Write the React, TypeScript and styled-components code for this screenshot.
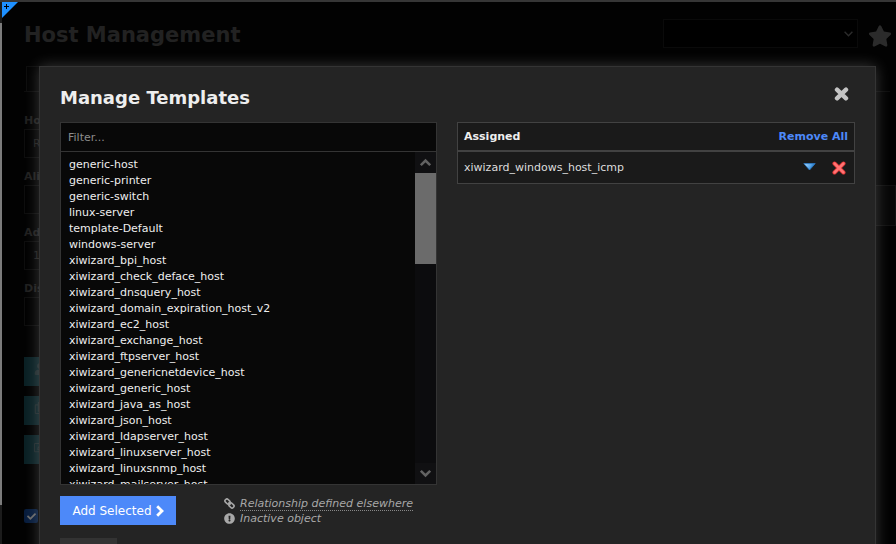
import React from "react";
import styled, { createGlobalStyle, css } from "styled-components";
import {
  FaCheck,
  FaExclamationCircle,
  FaRegCopy,
  FaRegEdit,
  FaStar,
  FaUser,
} from "react-icons/fa";

const GlobalStyle = createGlobalStyle`
  * { box-sizing: border-box; }
  body {
    margin: 0;
    background: #020202;
    color: #eee;
    font: 11px/16px Verdana, "DejaVu Sans", sans-serif;
  }
  button, input, select { font: inherit; color: inherit; border-radius: 0; }
`;

const Screen = styled.div`
  position: relative;
  display: grid;
  grid-template-columns: 2px 1fr;
  height: 100vh;
  overflow: hidden;
  border-top: 2px solid #363636;
`;

const Rail = styled.div`
  display: flex;
  flex-direction: column;
  background: #1c1c1c;
  padding: 21px 0 39px;
`;

const RailHandle = styled.div`
  flex: 1;
  background: #7c7c7c;
`;

const Page = styled.main`
  min-width: 0;
  padding: 17px 0 0 22px;
`;

const CornerButton = styled.button`
  position: absolute;
  top: 0;
  left: 2px;
  width: 16px;
  height: 16px;
  padding: 0;
  border: 0;
  background: none;
  svg { display: block; }
`;

const PageHeader = styled.header`
  display: flex;
  align-items: flex-start;
  justify-content: space-between;
  padding-right: 4px;
  height: 47px;
`;

const PageTitle = styled.h1`
  margin: 0;
  font-size: 21px;
  line-height: 32px;
  color: #222;
`;

const HeaderTools = styled.div`
  display: flex;
  align-items: flex-start;
  gap: 10px;
  color: #2b2b2b;
  > svg { margin-top: 5px; }
`;

const SelectWrap = styled.div`
  display: grid;
  align-items: center;
  width: 195px;
  > * { grid-area: 1 / 1; }
  svg { justify-self: end; margin-right: 5px; pointer-events: none; }
`;

const HostSelect = styled.select`
  width: 100%;
  height: 29px;
  border: 1px solid #0a0a0a;
  background: #000;
  appearance: none;
`;

const TabStrip = styled.div`
  display: flex;
  height: 26px;
  margin-right: 6px;
  border-bottom: 1px solid #0d0d0d;
`;

const Tab = styled.button`
  width: 120px;
  margin-left: 2px;
  border: 1px solid #0d0d0d;
  border-bottom: 0;
  background: none;
`;

const FormArea = styled.div`
  display: grid;
  grid-template-columns: 200px 1fr;
  gap: 20px;
  padding-top: 20px;
`;

const Fields = styled.div`
  display: flex;
  flex-direction: column;
  gap: 10px;
`;

const Field = styled.label`
  display: flex;
  flex-direction: column;
  font-weight: bold;
  line-height: 17px;
  color: #1f1f1f;
`;

const FieldInput = styled.input`
  height: 29px;
  padding: 0 8px;
  border: 1px solid #0d0d0d;
  background: #010101;
  font-weight: normal;
`;

const SideRow = styled.div`
  align-self: start;
  height: 41px;
  margin-top: 73px;
  border: 1px solid #111;
  background: #070707;
`;

const ActionStack = styled.div`
  display: flex;
  flex-direction: column;
  align-items: flex-start;
  gap: 10px;
  margin-top: 31px;
`;

const TealButton = styled.button`
  width: 150px;
  height: 29px;
  padding: 0 10px;
  border: 0;
  background: #0a2024;
  color: #1f2a2c;
  text-align: left;
`;

const CheckLabel = styled.label`
  display: grid;
  width: 14px;
  margin-top: 45px;
  place-items: center;
  color: #686868;
  > * { grid-area: 1 / 1; }
  svg { pointer-events: none; }
`;

const CheckBox = styled.input`
  appearance: none;
  width: 14px;
  height: 14px;
  margin: 0;
  border-radius: 2px;
  background: #071c3c;
`;

const Overlay = styled.div`
  position: absolute;
  inset: 0;
  padding: 64px 20px 0 39px;
`;

const Dialog = styled.section`
  padding: 20px;
  border: 1px solid #343434;
  background: #242424;
  box-shadow: 0 0 14px rgba(255, 255, 255, 0.22);
`;

const DialogHeader = styled.header`
  display: flex;
  justify-content: space-between;
  height: 35px;
`;

const DialogTitle = styled.h2`
  margin: 0;
  font-size: 18px;
  line-height: 22px;
  color: #eee;
`;

const plainButton = css`
  padding: 0;
  border: 0;
  background: none;
  cursor: pointer;
  svg { display: block; }
`;

const CloseButton = styled.button`
  ${plainButton}
  align-self: flex-start;
  margin-right: 6px;
`;

const Columns = styled.div`
  display: grid;
  grid-template-columns: 377fr 398fr;
  gap: 20px;
  align-items: start;
`;

const FilterInput = styled.input`
  display: block;
  width: 100%;
  height: 29px;
  padding: 0 7px;
  border: 1px solid #343434;
  border-bottom: 0;
  background: #080808;
  &::placeholder { color: #8c8c8c; opacity: 1; }
`;

const ListFrame = styled.div`
  display: grid;
  grid-template-columns: 1fr 21px;
  height: 334px;
  border: 1px solid #343434;
  background: #080808;
`;

const TemplateList = styled.select`
  min-width: 0;
  height: 332px;
  padding: 6px 6px 0;
  border: 0;
  outline: 0;
  background: #080808;
  color: #eee;
  overflow-y: auto;
  scrollbar-width: none;
  option {
    height: 16px;
    min-height: 16px;
    padding: 0 2px;
    line-height: 16px;
  }
`;

const ScrollTrack = styled.div`
  display: flex;
  flex-direction: column;
  background: #0c0c0e;
`;

const ScrollArrow = styled.button`
  ${plainButton}
  display: grid;
  place-items: center;
  height: 21px;
  background: #101012;
`;

const ScrollThumb = styled.div`
  height: 91px;
  margin-bottom: auto;
  background: #6b6b6b;
`;

const AssignedTable = styled.table`
  width: 100%;
  border-collapse: collapse;
  border: 1px solid #424242;
  background: #1a1a1a;
  th, td { padding: 0 6px; text-align: left; }
  th { height: 28px; padding-top: 2px; border-bottom: 2px solid #424242; }
  td { height: 33px; padding-top: 1px; color: #ddd; }
  td:last-child { padding-right: 8px; }
`;

const RowEnd = styled.div`
  display: flex;
  justify-content: flex-end;
  align-items: center;
  gap: 16px;
`;

const RemoveAll = styled.a`
  color: #4d89f9;
  text-decoration: none;
`;

const IconButton = styled.button`
  ${plainButton}
`;

const DialogActions = styled.div`
  display: flex;
  align-items: flex-start;
  gap: 48px;
  margin-top: 11px;
`;

const AddButton = styled.button`
  display: flex;
  align-items: center;
  justify-content: center;
  gap: 4px;
  min-width: 116px;
  height: 29px;
  padding: 0 10px;
  border: 0;
  background: #4d89f9;
  color: #fff;
  font-size: 12px;
  white-space: nowrap;
`;

const Legend = styled.ul`
  margin: 0;
  padding: 0;
  list-style: none;
  color: #a8a8a8;
  font-style: italic;
  line-height: 15px;
`;

const LegendItem = styled.li`
  display: flex;
  align-items: center;
  gap: 5px;
  height: 15px;
`;

const Hint = styled.span`
  height: 15px;
  border-bottom: 1px dotted #888;
`;

const GreyButton = styled.button`
  display: block;
  width: 57px;
  height: 29px;
  margin-top: 12px;
  border: 0;
  background: #333;
`;

const templates = [
  "generic-host",
  "generic-printer",
  "generic-switch",
  "linux-server",
  "template-Default",
  "windows-server",
  "xiwizard_bpi_host",
  "xiwizard_check_deface_host",
  "xiwizard_dnsquery_host",
  "xiwizard_domain_expiration_host_v2",
  "xiwizard_ec2_host",
  "xiwizard_exchange_host",
  "xiwizard_ftpserver_host",
  "xiwizard_genericnetdevice_host",
  "xiwizard_generic_host",
  "xiwizard_java_as_host",
  "xiwizard_json_host",
  "xiwizard_ldapserver_host",
  "xiwizard_linuxserver_host",
  "xiwizard_linuxsnmp_host",
  "xiwizard_mailserver_host",
];

const hostFields = [
  { label: "Host Name", value: "R" },
  { label: "Alias", value: "" },
  { label: "Address", value: "1" },
  { label: "Display Name", value: "" },
];

const Chevron = ({ up = false }: { up?: boolean }) => (
  <svg width="11" height="9" viewBox="0 0 11 9" fill="none" stroke="#626262" strokeWidth="2.6">
    <path d={up ? "M.8 7.2 5.5 2.5l4.7 4.7" : "M.8 1.8 5.5 6.5l4.7-4.7"} />
  </svg>
);

const CloseIcon = () => (
  <svg width="15" height="14" viewBox="0 0 15 14" stroke="#c4c4c4" strokeWidth="4.4" strokeLinecap="round">
    <path d="M3 2.7 12 11.3M12 2.7 3 11.3" />
  </svg>
);

const ArrowIcon = () => (
  <svg width="8" height="12" viewBox="0 0 8 12" fill="none" stroke="#fff" strokeWidth="2.8">
    <path d="M1.2 1.2 6 6l-4.8 4.8" />
  </svg>
);

const ChainIcon = () => (
  <svg width="11" height="11" viewBox="0 0 11 11" fill="none" stroke="currentColor" strokeWidth="1.6">
    <rect x=".8" y="1.6" width="5.4" height="3.8" rx="1.7" transform="rotate(45 3.5 3.5)" />
    <rect x="4.8" y="5.6" width="5.4" height="3.8" rx="1.7" transform="rotate(45 7.5 7.5)" />
    <path d="M4.4 4.4l2.2 2.2" />
  </svg>
);

const DownIcon = () => (
  <svg width="13" height="10" viewBox="0 0 13 10">
    <defs>
      <linearGradient id="down" x1="0" y1="0" x2="1" y2="0.3">
        <stop offset="0" stopColor="#b5dcfa" />
        <stop offset="0.6" stopColor="#5ba9ec" />
        <stop offset="1" stopColor="#1767b4" />
      </linearGradient>
    </defs>
    <path d="M.8.6h11.4L6.5 7z" fill="url(#down)" stroke="#2b7ccb" strokeWidth=".8" />
  </svg>
);

const DeleteIcon = () => (
  <svg width="14" height="14" viewBox="0 0 14 14" strokeLinecap="round">
    <path d="M2.5 2.5 11.5 11.5M11.5 2.5 2.5 11.5" stroke="#e83a3a" strokeWidth="4" />
    <path d="M2.6 2.6 11.4 11.4M11.4 2.6 2.6 11.4" stroke="#ff7474" strokeWidth="2.4" />
  </svg>
);

export default function App() {
  return (
    <Screen>
      <GlobalStyle />
      <Rail>
        <RailHandle />
      </Rail>
      <Page>
        <PageHeader>
          <PageTitle>Host Management</PageTitle>
          <HeaderTools>
            <SelectWrap>
              <HostSelect aria-label="Host" />
              <svg width="9" height="6" viewBox="0 0 9 6" fill="none" stroke="currentColor" strokeWidth="1.4">
                <path d="M.6.8 4.5 4.7 8.4.8" />
              </svg>
            </SelectWrap>
            <FaStar size={24} />
          </HeaderTools>
        </PageHeader>
        <TabStrip>
          <Tab aria-label="Common settings" />
        </TabStrip>
        <FormArea>
          <Fields>
            {hostFields.map((field) => (
              <Field key={field.label}>
                {field.label}
                <FieldInput defaultValue={field.value} />
              </Field>
            ))}
          </Fields>
          <SideRow />
        </FormArea>
        <ActionStack>
          <TealButton aria-label="Templates"><FaUser size={12} /></TealButton>
          <TealButton aria-label="Copy"><FaRegCopy size={12} /></TealButton>
          <TealButton aria-label="Edit"><FaRegEdit size={12} /></TealButton>
        </ActionStack>
        <CheckLabel>
          <CheckBox type="checkbox" defaultChecked aria-label="Active" />
          <FaCheck size={9} />
        </CheckLabel>
      </Page>
      <CornerButton aria-label="Expand">
        <svg width="16" height="16" viewBox="0 0 16 16">
          <path d="M0 0h16L0 16z" fill="#1e90ff" />
          <path d="M4.5 2v5M2 4.5h5" stroke="#000" strokeWidth="1" />
        </svg>
      </CornerButton>
      <Overlay>
        <Dialog role="dialog" aria-labelledby="dialog-title">
          <DialogHeader>
            <DialogTitle id="dialog-title">Manage Templates</DialogTitle>
            <CloseButton aria-label="Close">
              <CloseIcon />
            </CloseButton>
          </DialogHeader>
          <Columns>
            <div>
              <FilterInput placeholder="Filter..." aria-label="Filter templates" />
              <ListFrame>
                <TemplateList multiple aria-label="Templates">
                  {templates.map((name) => (
                    <option key={name}>{name}</option>
                  ))}
                </TemplateList>
                <ScrollTrack>
                  <ScrollArrow aria-label="Scroll up"><Chevron up /></ScrollArrow>
                  <ScrollThumb />
                  <ScrollArrow aria-label="Scroll down"><Chevron /></ScrollArrow>
                </ScrollTrack>
              </ListFrame>
              <DialogActions>
                <AddButton>
                  Add Selected <ArrowIcon />
                </AddButton>
                <Legend>
                  <LegendItem>
                    <ChainIcon />
                    <Hint>Relationship defined elsewhere</Hint>
                  </LegendItem>
                  <LegendItem>
                    <FaExclamationCircle size={11} />
                    <span>Inactive object</span>
                  </LegendItem>
                </Legend>
              </DialogActions>
            </div>
            <AssignedTable>
              <thead>
                <tr>
                  <th>Assigned</th>
                  <th>
                    <RowEnd>
                      <RemoveAll href="#">Remove All</RemoveAll>
                    </RowEnd>
                  </th>
                </tr>
              </thead>
              <tbody>
                <tr>
                  <td>xiwizard_windows_host_icmp</td>
                  <td>
                    <RowEnd>
                      <IconButton aria-label="Move down"><DownIcon /></IconButton>
                      <IconButton aria-label="Remove"><DeleteIcon /></IconButton>
                    </RowEnd>
                  </td>
                </tr>
              </tbody>
            </AssignedTable>
          </Columns>
          <GreyButton aria-label="Close dialog" />
        </Dialog>
      </Overlay>
    </Screen>
  );
}
